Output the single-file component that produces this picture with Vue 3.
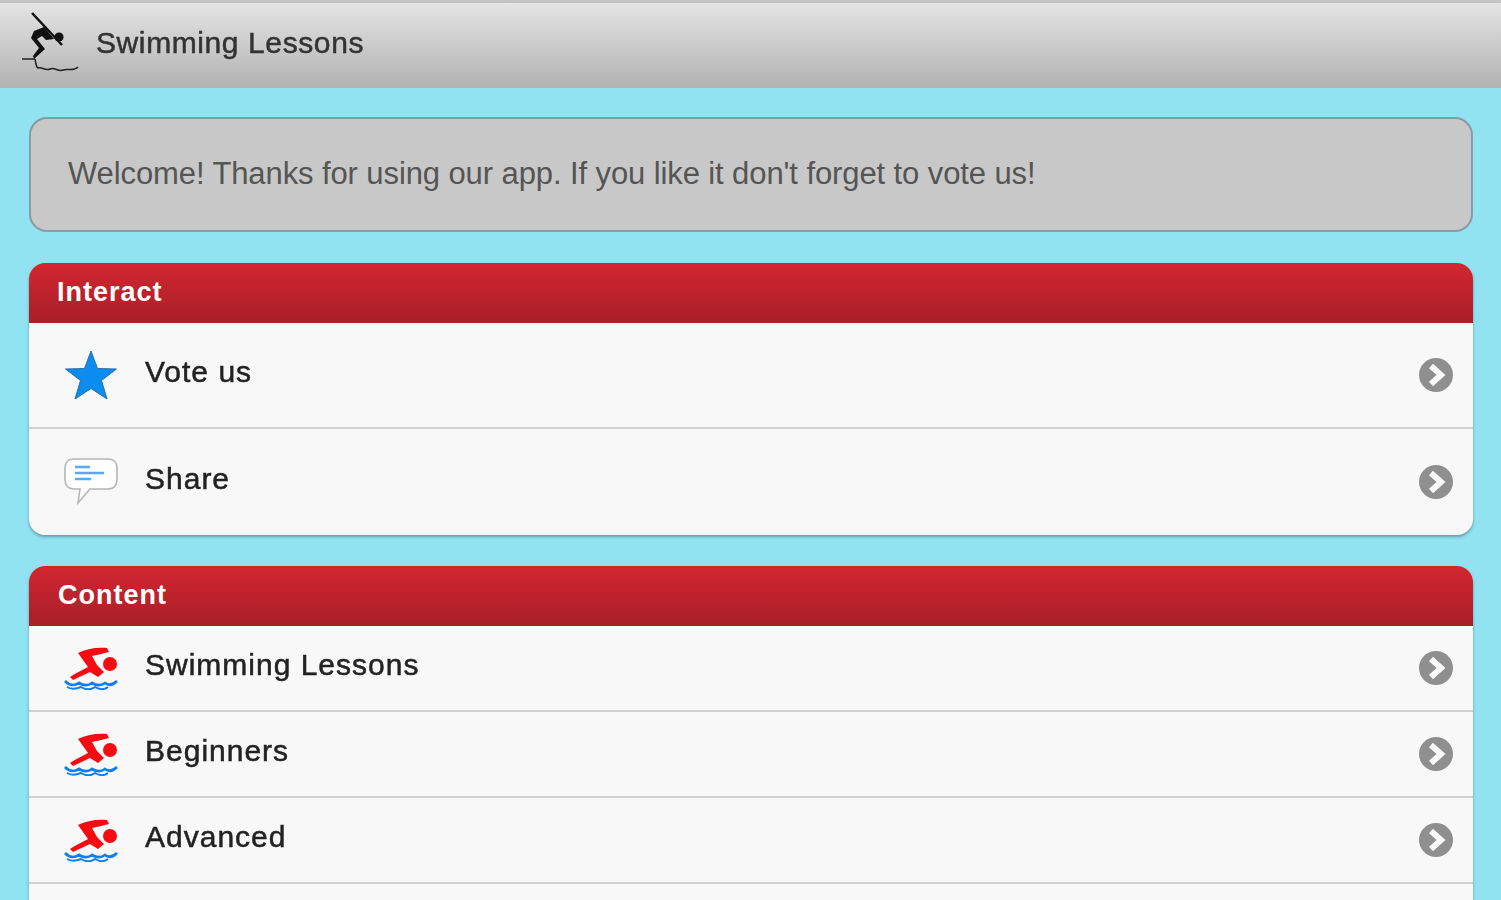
<script setup>
const interact = [
  { label: "Vote us", icon: "star" },
  { label: "Share", icon: "chat" }
];
const content = ["Swimming Lessons", "Beginners", "Advanced", ""];
</script>

<template>
  <div class="page">
    <header class="topbar">
      <svg class="diver" viewBox="0 0 64 64" width="64" height="64">
        <path d="M14 1 L44 33" stroke="#111" stroke-width="2.5" fill="none" />
        <circle cx="41" cy="25" r="4.6" fill="#111" />
        <path d="M16 19 L26 15 L36 27 L28 28 L24 24 L19 27 L27 37 L16 47 L15 44 L21 36 L13 26 Z" fill="#111" />
        <path d="M4 47 H17 M17 47 C18 52 18 55 20 56 C25 55 27 59 32 57 C37 55 40 60 45 58 C50 56 55 60 60 55" stroke="#222" stroke-width="1.5" fill="none" />
      </svg>
      <h1 class="title">Swimming Lessons</h1>
    </header>

    <main class="content">
      <div class="notice">Welcome! Thanks for using our app. If you like it don't forget to vote us!</div>

      <section class="card">
        <div class="card-head interact-head">Interact</div>
        <div v-for="item in interact" :key="item.label" class="row row-tall">
          <span class="row-icon">
            <svg v-if="item.icon === 'star'" viewBox="0 0 54 52" width="54" height="52">
              <path d="M27 2 L33.5 19.5 L52.5 20 L37.5 31.5 L43 50 L27 39.5 L11 50 L16.5 31.5 L1.5 20 L20.5 19.5 Z" fill="#0d8cf0" stroke="#2b6ea8" stroke-width="1" />
            </svg>
            <svg v-else viewBox="0 0 54 52" width="54" height="52">
              <path d="M10 3 H44 C50 3 53 7 53 12 V23 C53 29 50 33 44 33 H26 L14 47 L16 33 H10 C4 33 1 29 1 23 V12 C1 7 4 3 10 3 Z" fill="#fff" stroke="#b5b5b5" stroke-width="1.6" />
              <path d="M11 11 H26 M11 17 H40 M11 23 H27" stroke="#5aa9f5" stroke-width="2.6" fill="none" />
            </svg>
          </span>
          <span class="row-label">{{ item.label }}</span>
          <svg class="chevron" viewBox="0 0 36 36" width="36" height="36">
            <circle cx="18" cy="18" r="17" fill="#8f8f8f" />
            <path d="M13 9 L23 18 L13 27" stroke="#fafafa" stroke-width="6" fill="none" />
          </svg>
        </div>
      </section>

      <section class="card">
        <div class="card-head content-head">Content</div>
        <div v-for="(label, i) in content" :key="i" class="row row-short">
          <template v-if="label">
            <span class="row-icon">
              <svg viewBox="0 0 54 44" width="54" height="44">
                <path d="M14 7 C22 3 32 1 43 2 L45 6 C38 8 32 9 28 10 L33 19 L40 26 L34 31 L26 26 L9 34 L6 31 C11 27 19 24 24 21 Z" fill="#f40c12" />
                <circle cx="46" cy="18" r="7" fill="#f40c12" />
                <path d="M1 35 C6 40 10 40 15 37 C20 40 24 40 28 37 C33 40 37 40 41 37 C45 40 49 39 53 35" stroke="#0f7ff0" stroke-width="2.8" fill="none" />
                <path d="M3 41 C8 44 12 43 17 41 C22 44 27 44 31 41 C36 44 40 44 44 41" stroke="#0f7ff0" stroke-width="2" fill="none" />
              </svg>
            </span>
            <span class="row-label">{{ label }}</span>
            <svg class="chevron" viewBox="0 0 36 36" width="36" height="36">
              <circle cx="18" cy="18" r="17" fill="#8f8f8f" />
              <path d="M13 9 L23 18 L13 27" stroke="#fafafa" stroke-width="6" fill="none" />
            </svg>
          </template>
        </div>
      </section>
    </main>
  </div>
</template>

<style>
html,
body {
  margin: 0;
  overflow: hidden;
  background: #91e3f1;
}
</style>

<style scoped>
.page {
  width: 1501px;
  height: 900px;
  overflow: hidden;
  background: #91e3f1;
  font-family: "Liberation Sans", Arial, sans-serif;
}

.topbar {
  box-sizing: border-box;
  height: 88px;
  display: flex;
  align-items: center;
  padding: 0 0 0 18px;
  border-top: 3px solid #c4c4c4;
  background: linear-gradient(#e4e4e4, #b2b2b2);
}

.diver {
  margin-top: -3px;
}

.title {
  margin: -6px 0 0 14px;
  font-size: 30px;
  font-weight: 400;
  letter-spacing: 0.6px;
  color: #333;
  -webkit-text-stroke: 0.5px #333;
  filter: blur(0.6px);
}

.content {
  padding: 29px 28px 0 29px;
}

.notice {
  box-sizing: border-box;
  height: 115px;
  display: flex;
  align-items: center;
  padding: 0 0 2px 37px;
  margin-bottom: 31px;
  border: 2px solid #8a9ca3;
  border-radius: 18px;
  background: #c8c8c8;
  color: #555;
  font-size: 31px;
  letter-spacing: -0.1px;
}

.card {
  margin-bottom: 31px;
  border-radius: 16px;
  overflow: hidden;
  background: #f8f8f8;
  box-shadow: 0 2px 3px rgba(70, 110, 125, 0.6);
}

.card-head {
  box-sizing: border-box;
  height: 60px;
  display: flex;
  align-items: center;
  color: #fff;
  font-size: 27px;
  font-weight: 700;
  letter-spacing: 1px;
  background: linear-gradient(#d22630, #a81f28);
  filter: none;
}

.interact-head {
  padding: 0 0 2px 28px;
}

.content-head {
  padding: 0 0 2px 29px;
}

.row {
  box-sizing: border-box;
  display: flex;
  align-items: center;
  padding: 0 19px 0 35px;
  border-bottom: 2px solid #d0d0d0;
}

.row:last-child {
  border-bottom: none;
}

.row-tall {
  height: 106px;
}

.row-short {
  height: 86px;
}

.row-icon {
  width: 81px;
  display: flex;
}

.row-label {
  flex: 1;
  margin-top: -6px;
  font-size: 30px;
  letter-spacing: 1px;
  color: #222;
  -webkit-text-stroke: 0.5px #222;
  filter: blur(0.5px);
}
</style>
